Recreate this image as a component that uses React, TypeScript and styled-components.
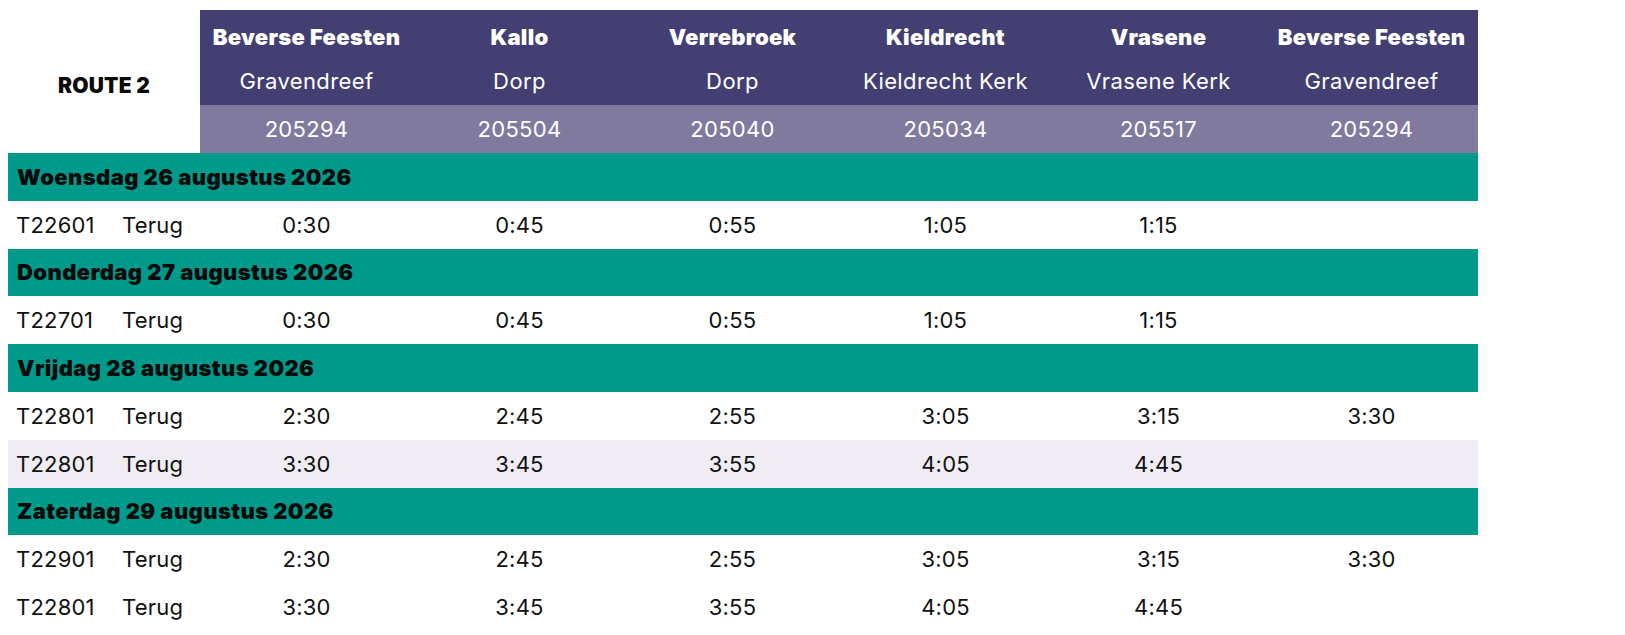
import React from "react";
import styled, {createGlobalStyle} from "styled-components";

const GlobalStyle = createGlobalStyle`
  body {
    margin: 0;
    background: #ffffff;
    font-family: "Inter", "Noto Sans", sans-serif;
  }
`;

type Stop = {town: string; place: string; code: string};

const stops: Stop[] = [
  {town: "Beverse Feesten", place: "Gravendreef", code: "205294"},
  {town: "Kallo", place: "Dorp", code: "205504"},
  {town: "Verrebroek", place: "Dorp", code: "205040"},
  {town: "Kieldrecht", place: "Kieldrecht Kerk", code: "205034"},
  {town: "Vrasene", place: "Vrasene Kerk", code: "205517"},
  {town: "Beverse Feesten", place: "Gravendreef", code: "205294"},
];

type Trip = {id: string; times: string[]; shaded?: boolean};
type Day = {label: string; trips: Trip[]};

const days: Day[] = [
  {
    label: "Woensdag 26 augustus 2026",
    trips: [{id: "T22601", times: ["0:30", "0:45", "0:55", "1:05", "1:15", ""]}],
  },
  {
    label: "Donderdag 27 augustus 2026",
    trips: [{id: "T22701", times: ["0:30", "0:45", "0:55", "1:05", "1:15", ""]}],
  },
  {
    label: "Vrijdag 28 augustus 2026",
    trips: [
      {id: "T22801", times: ["2:30", "2:45", "2:55", "3:05", "3:15", "3:30"]},
      {id: "T22801", times: ["3:30", "3:45", "3:55", "4:05", "4:45", ""], shaded: true},
    ],
  },
  {
    label: "Zaterdag 29 augustus 2026",
    trips: [
      {id: "T22901", times: ["2:30", "2:45", "2:55", "3:05", "3:15", "3:30"]},
      {id: "T22801", times: ["3:30", "3:45", "3:55", "4:05", "4:45", ""]},
    ],
  },
];

export default function App() {
  return (
    <>
      <GlobalStyle />
      <Page>
        <Table>
          <Head>
            <Corner>ROUTE 2</Corner>
            {stops.map((s, i) => (
              <StopCell key={"s" + i}>
                <Town>{s.town}</Town>
                <Place>{s.place}</Place>
              </StopCell>
            ))}
            {stops.map((s, i) => (
              <CodeCell key={"c" + i}>{s.code}</CodeCell>
            ))}
          </Head>
          {days.map((d) => (
            <React.Fragment key={d.label}>
              <DayBar>{d.label}</DayBar>
              {d.trips.map((t, i) => (
                <TripRow key={i} $shaded={t.shaded}>
                  <IdCell>{t.id}</IdCell>
                  <DirCell>Terug</DirCell>
                  {t.times.map((tm, j) => (
                    <TimeCell key={j}>{tm}</TimeCell>
                  ))}
                </TripRow>
              ))}
            </React.Fragment>
          ))}
        </Table>
      </Page>
    </>
  );
}

const Page = styled.div`
  padding: 10px 0 0 8px;
`;

const Table = styled.div`
  width: 1470px;
  display: flex;
  flex-direction: column;
`;

const Head = styled.div`
  display: grid;
  grid-template-columns: 192px repeat(6, 1fr);
  grid-template-rows: 95px 48px;
`;

const Corner = styled.div`
  grid-row: 1 / span 2;
  display: flex;
  align-items: center;
  justify-content: center;
  padding-top: 8px;
  font-size: 21px;
  font-weight: 900;
  color: #0a0a0a;
  letter-spacing: 0.2px;
`;

const StopCell = styled.div`
  background: #433f73;
  color: #ffffff;
  display: flex;
  flex-direction: column;
  align-items: center;
  padding-top: 12px;
  gap: 14px;
`;

const Town = styled.div`
  font-size: 22px;
  font-weight: 900;
  line-height: 30px;
  letter-spacing: 0.3px;
`;

const Place = styled.div`
  font-size: 22px;
  font-weight: 400;
  line-height: 30px;
  letter-spacing: 0.4px;
`;

const CodeCell = styled.div`
  background: #807a9f;
  color: #ffffff;
  display: flex;
  align-items: center;
  justify-content: center;
  font-size: 22px;
  letter-spacing: 0.3px;
`;

const DayBar = styled.div`
  height: 47.8px;
  background: #009a8b;
  display: flex;
  align-items: center;
  padding-left: 9px;
  font-size: 22px;
  font-weight: 900;
  color: #0a0a0a;
  letter-spacing: 0.4px;
`;

const TripRow = styled.div<{$shaded?: boolean}>`
  height: 47.8px;
  display: grid;
  grid-template-columns: 106px 86px repeat(6, 1fr);
  align-items: center;
  background: ${(p) => (p.$shaded ? "#efecf3" : "#ffffff")};
  color: #111111;
  font-size: 22px;
  letter-spacing: 0.2px;
`;

const IdCell = styled.div`
  padding-left: 8px;
`;

const DirCell = styled.div`
  padding-left: 8px;
`;

const TimeCell = styled.div`
  text-align: center;
`;
